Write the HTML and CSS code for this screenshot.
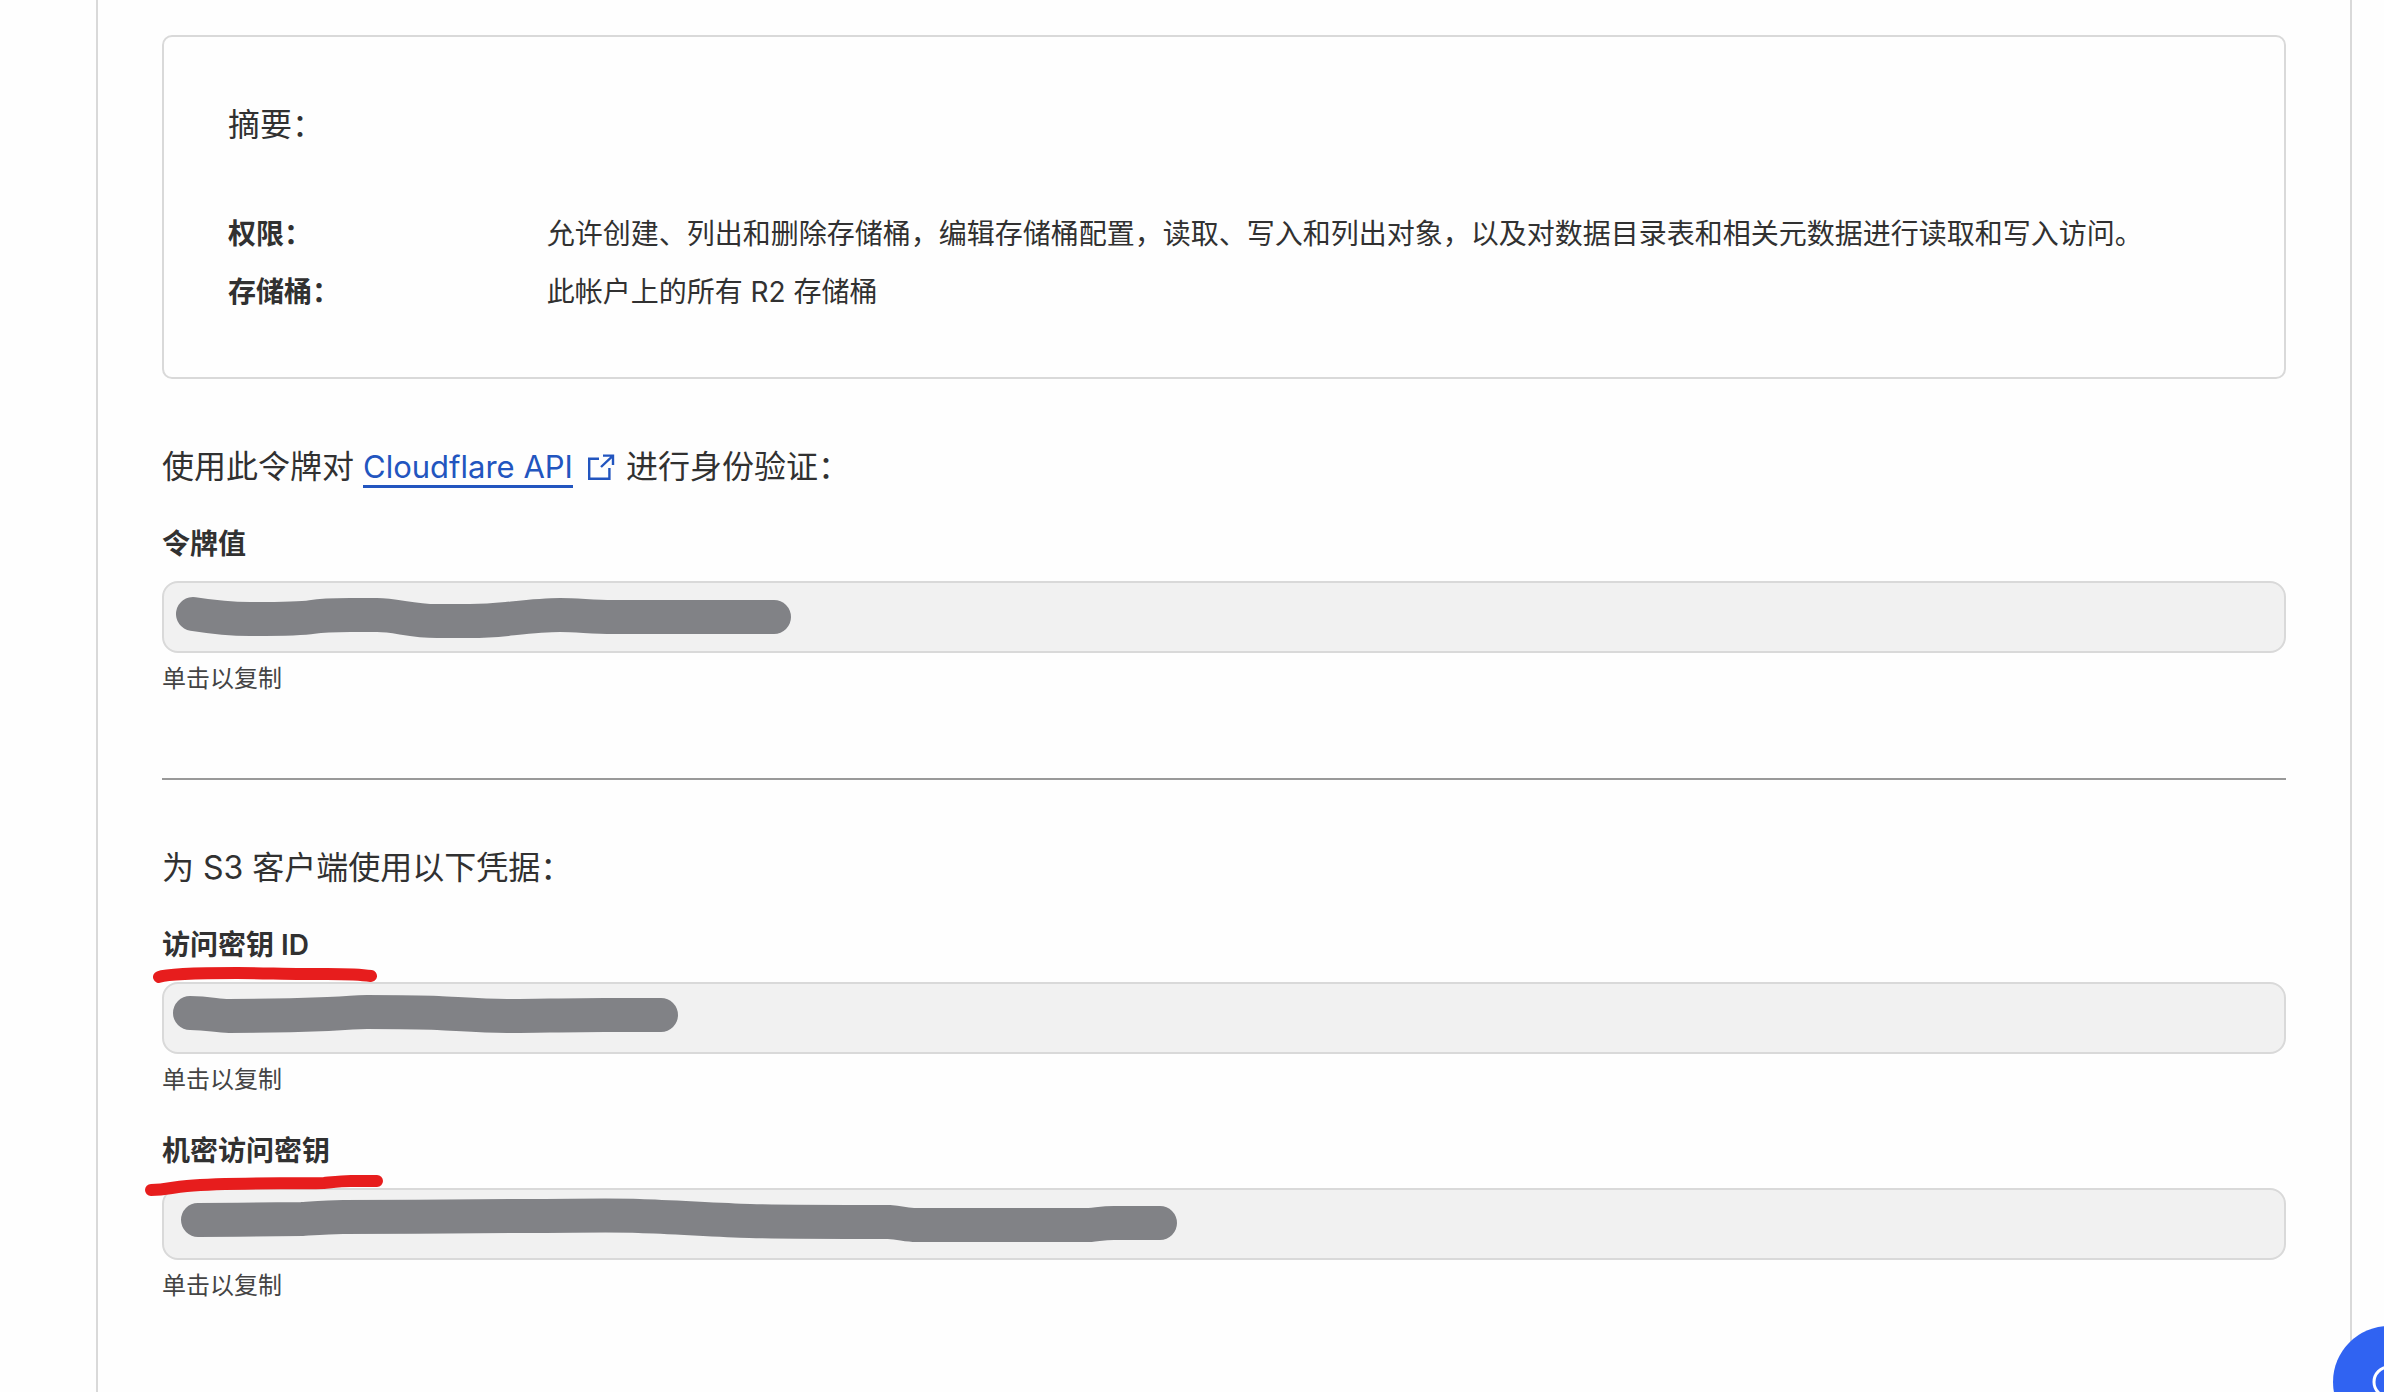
FILE: index.html
```html
<!DOCTYPE html>
<html lang="zh-CN">
<head>
    <meta charset="UTF-8">
    <meta name="viewport" content="width=device-width, initial-scale=1.0">
    <title>R2 API 令牌</title>
    <link rel="stylesheet" href="styles.css">
</head>
<body>
    <main class="panel">
        <!-- Token summary -->
        <section class="summary">
            <p class="lead">摘要：</p>
            <dl class="summary-list">
                <dt>权限：</dt>
                <dd>允许创建、列出和删除存储桶，编辑存储桶配置，读取、写入和列出对象，以及对数据目录表和相关元数据进行读取和写入访问。</dd>
                <dt>存储桶：</dt>
                <dd>此帐户上的所有 R2 存储桶</dd>
            </dl>
        </section>

        <!-- API token -->
        <section class="credentials">
            <p class="lead">使用此令牌对 <a class="link" href="#"><span class="link-text">Cloudflare API</span><svg class="link-icon" viewBox="0 0 28 28" aria-hidden="true"><path d="M12 5.8H2.2V25.8H22.4V15M14 14L26 2.6M16 2.6H26V12"/></svg></a> 进行身份验证：</p>
            <div class="field">
                <label for="token">令牌值</label>
                <div class="field-box">
                    <input type="text" id="token" readonly>
                    <svg class="marks" aria-hidden="true">
                        <path class="mask" d="M31 33C50 36 68 38 88 38C115 38 138 38 150 36S175 34 188 34H215C235 34 248 40 275 40H308C325 40 335 39 345 38S380 34 398 34S430 36 451 36H612"/>
                    </svg>
                </div>
                <p class="hint">单击以复制</p>
            </div>
        </section>

        <hr class="divider">

        <!-- S3 keys -->
        <section class="credentials">
            <p class="lead">为 S3 客户端使用以下凭据：</p>
            <div class="field">
                <label for="accessKey">访问密钥 ID</label>
                <div class="field-box">
                    <input type="text" id="accessKey" readonly>
                    <svg class="marks" aria-hidden="true">
                        <path class="mask" d="M28 31C48 31 54 34 67 34C100 34 140 33 166 32S190 30 205 30C230 30 255 30 276 31S320 34 345 34S410 33 442 33H499"/>
                        <path class="underline" d="M-3 -5C5 -8 30 -9 75 -9C100 -9 120 -8 140 -8C170 -8 190 -9 209 -6"/>
                    </svg>
                </div>
                <p class="hint">单击以复制</p>
            </div>
            <div class="field">
                <label for="secretKey">机密访问密钥</label>
                <div class="field-box">
                    <input type="text" id="secretKey" readonly>
                    <svg class="marks" aria-hidden="true">
                        <path class="mask" d="M36 32C70 32 120 31 140 31C155 30 168 29 181 29C240 29 310 28 363 28C410 28 450 27 477 28C510 29 555 32 588 33C620 34 700 34 727 34C740 35 745 37 754 37H928C938 36 942 35 952 35H998"/>
                        <path class="underline" d="M-11 2C5 2 10 -1 25 -2C70 -6 120 -4 162 -5C172 -6 180 -7 189 -7H215"/>
                    </svg>
                </div>
                <p class="hint">单击以复制</p>
            </div>
        </section>
    </main>

    <!-- Help button -->
    <button class="help" type="button" aria-label="帮助">
        <svg class="help-icon" viewBox="0 0 40 40" aria-hidden="true"><circle cx="20" cy="20" r="15"/><path d="M31 31L38 38"/></svg>
    </button>
</body>
</html>
```
FILE: styles.css
```css
* {
    box-sizing: border-box;
}

body {
    margin: 0;
    background: #fefefe;
    color: #313131;
    font-family: Inter, "Noto Sans CJK SC", sans-serif;
    font-size: 28px;
    line-height: 42px;
}

p,
dl,
dd {
    margin: 0;
}

.panel {
    min-height: 100vh;
    margin: 0 32px 0 96px;
    padding: 35px 64px;
    border: 2px solid #d9d9d9;
    border-width: 0 2px;
}

.summary {
    margin-bottom: 64px;
    padding: 64px;
    border: 2px solid #d9d9d9;
    border-radius: 10px;
}

.lead {
    font-size: 32px;
    line-height: 48px;
}

.summary-list {
    display: grid;
    grid-template-columns: 16% 1fr;
    row-gap: 16px;
    margin-top: 64px;
}

.summary-list dt {
    font-weight: 700;
}

.credentials {
    display: flex;
    flex-direction: column;
    gap: 32px;
}

.link {
    color: #2255bf;
    font-size: 31px;
    text-decoration: none;
}

.link-text {
    border-bottom: 3px solid #2255bf;
}

.link-icon {
    width: 28px;
    height: 28px;
    margin: 0 2px 0 14px;
    vertical-align: -3px;
    fill: none;
    stroke: #2255bf;
    stroke-width: 2.4;
}

.field {
    display: flex;
    flex-direction: column;
}

.field label {
    align-self: flex-start;
    margin-bottom: 16px;
    font-weight: 600;
}

.field-box {
    position: relative;
}

.field input {
    display: block;
    width: 100%;
    height: 72px;
    padding: 0 16px;
    border: 2px solid #d9d9d9;
    border-radius: 16px;
    background: #f1f1f1;
    color: #313131;
    font: inherit;
}

/* Pen strokes drawn over the fields */
.marks {
    position: absolute;
    top: 0;
    left: 0;
    width: 100%;
    height: 100%;
    overflow: visible;
    pointer-events: none;
    fill: none;
    stroke-linecap: round;
    stroke-linejoin: round;
}

.mask {
    stroke: #818286;
    stroke-width: 34;
}

.underline {
    stroke: #e71d1d;
    stroke-width: 12;
}

.hint {
    margin-top: 8px;
    color: #444;
    font-size: 24px;
    line-height: 36px;
}

.divider {
    margin: 81px 0 64px;
    border: 0;
    border-top: 2px solid #999;
}

.help {
    position: fixed;
    right: -61px;
    bottom: -46px;
    display: flex;
    align-items: center;
    justify-content: center;
    width: 112px;
    height: 112px;
    padding: 0;
    border: 0;
    border-radius: 50%;
    background: #3063f2;
    cursor: pointer;
}

.help-icon {
    width: 40px;
    height: 40px;
    fill: none;
    stroke: #fff;
    stroke-width: 3;
    stroke-linecap: round;
}
```
